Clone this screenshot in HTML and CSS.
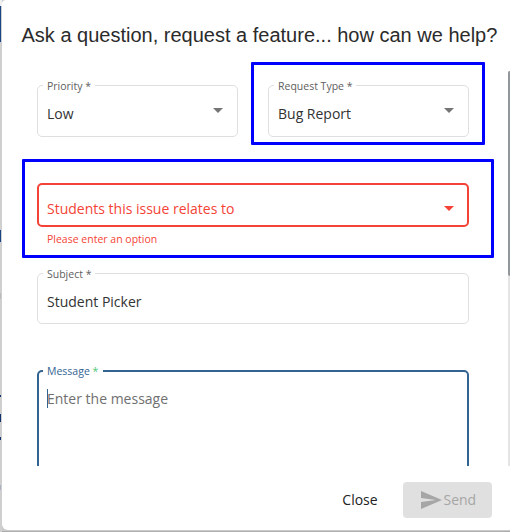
FILE: index.html
```html
<!DOCTYPE html>
<html lang="en">
<head>
<meta charset="utf-8">
<title>Support request</title>
<link rel="stylesheet" href="styles.css">
</head>
<body>
<div class="backdrop" aria-hidden="true"></div>
<main class="dialog">
  <h1 class="title"><span>Ask a question, request a feature... how can we help?</span></h1>
  <div class="scroll">
    <form class="form">
      <div class="row">
        <div class="field half">
          <span class="label">Priority *</span>
          <span class="value">Low</span>
          <svg class="arrow" width="10" height="5" viewBox="0 0 10 5"><path d="M0 0h10L5 5z"/></svg>
        </div>
        <div class="field half">
          <span class="label">Request Type *</span>
          <span class="value">Bug Report</span>
          <svg class="arrow" width="10" height="5" viewBox="0 0 10 5"><path d="M0 0h10L5 5z"/></svg>
          <div class="highlight highlight-type"></div>
        </div>
      </div>
      <div class="field error">
        <span class="value">Students this issue relates to</span>
        <svg class="arrow" width="10" height="5" viewBox="0 0 10 5"><path d="M0 0h10L5 5z"/></svg>
        <div class="highlight highlight-students"></div>
      </div>
      <div class="hint"><span>Please enter an option</span></div>
      <div class="field subject">
        <span class="label">Subject *</span>
        <span class="value">Student Picker</span>
      </div>
      <div class="field message">
        <span class="label">Message <span class="required">*</span></span>
        <span class="caret"></span>
        <span class="value placeholder">Enter the message</span>
      </div>
    </form>
    <div class="track"><div class="thumb"></div></div>
  </div>
  <footer class="actions">
    <button class="close" type="button"><span>Close</span></button>
    <button class="send" type="button" disabled>
      <svg width="21" height="18" viewBox="0 0 21 18"><path d="M0 0 21 9 0 18V11L15 9 0 7z"/></svg>
      <span>Send</span>
    </button>
  </footer>
</main>
</body>
</html>
```

FILE: styles.css
```css
* { box-sizing: border-box; }

body {
  margin: 0;
  width: 510px;
  height: 532px;
  overflow: hidden;
  display: flex;
  background: linear-gradient(to bottom, #cacaca 531px, #aeaeae 531px);
  font-family: "Open Sans", "Noto Sans", sans-serif;
  font-size: 14px;
  color: #333;
}

.backdrop {
  width: 2px;
  flex: none;
  background:
    linear-gradient(#174484, #174484) 0 6px / 1px 36px no-repeat,
    linear-gradient(#174484, #174484) 0 230px / 1px 12px no-repeat,
    linear-gradient(#bbb, #bbb) 0 293px / 1px 6px no-repeat,
    linear-gradient(#12306d, #12306d) 0 395px / 1px 2px no-repeat,
    linear-gradient(#12306d, #12306d) 0 414px / 1px 8px no-repeat,
    linear-gradient(#12306d, #12306d) 0 437px / 1px 3px no-repeat,
    linear-gradient(#aab2c2, #aab2c2) 0 485px / 1px 5px no-repeat,
    linear-gradient(#f0f0f0, #f0f0f0) 0 0 / 2px 6px no-repeat,
    #cfcfcf;
}

.dialog {
  width: 508px;
  height: 530px;
  display: flex;
  flex-direction: column;
  background: #fff;
  border-radius: 4px 0 0 6px;
}

.title {
  margin: 0;
  height: 71px;
  padding: 23px 0 0 19.5px;
  font: 400 20px/24px "Liberation Sans", Arial, sans-serif;
  color: #2b2b2b;
  white-space: nowrap;
}

/* Leaves room above the scroll area for the highlight frame. */
.scroll {
  height: 395px;
  display: flex;
  justify-content: space-between;
  clip-path: inset(-12px 0 0 0);
}

.form { width: 467px; padding: 14px 0 0 35px; }

.row { display: flex; gap: 30px; margin-bottom: 46px; }

.field {
  position: relative;
  display: flex;
  align-items: flex-start;
  justify-content: space-between;
  border: 1px solid #dfdfdf;
  border-radius: 5px;
  padding: 18px 14px 0 9px;
  line-height: 20px;
  white-space: nowrap;
}

.half { width: 201px; height: 52px; }

.label {
  position: absolute;
  left: 5px;
  top: -8px;
  padding: 0 4px;
  background: #fff;
  color: #606060;
  font-size: 10.5px;
  line-height: 16px;
}

.arrow { flex: none; margin-top: 4px; fill: #757575; }

.error {
  height: 44px;
  border: 2px solid #f44336;
  padding: 14px 13px 0 8px;
  color: #f44336;
}

.error .arrow { fill: #f44336; margin-top: 7px; }

.highlight { position: absolute; border: 3px solid #0000ff; border-radius: 1px; }
.highlight-type { left: -18px; top: -24px; width: 234px; height: 83px; }
.highlight-students { left: -17px; top: -26px; width: 472px; height: 99px; }

.hint {
  height: 46px;
  padding: 4px 0 0 10px;
  color: #f44336;
  font-size: 10.5px;
  line-height: 16px;
}

.subject { height: 51px; margin-bottom: 46px; }

.message {
  height: 140px;
  border: 2px solid #336491;
  padding: 17px 8px 0;
}

.message .label { left: 4px; top: -9px; padding-right: 5px; color: #336491; }
.label .required { color: #50c878; }
.placeholder { flex: 1; color: #707070; }

.caret {
  width: 1px;
  height: 19px;
  margin-right: -1px;
  background: #336491;
}

.track { width: 2px; background: #e4e4e4; }
.thumb { height: 205px; background: #92979b; border-radius: 2px 0 0 2px; }

.actions {
  display: flex;
  justify-content: flex-end;
  gap: 13px;
  padding: 16px 18px 0 0;
}

.close, .send {
  height: 36px;
  border: 0;
  border-radius: 4px;
  font: 14px/20px "Open Sans", "Noto Sans", sans-serif;
}

.close { width: 60px; padding: 0; background: #fff; color: #222; }

.send {
  width: 89px;
  display: flex;
  align-items: center;
  gap: 1.5px;
  padding: 0 0 0 18px;
  background: #e0e0e0;
  color: #a6a6a6;
}

.send svg { flex: none; fill: #a6a6a6; }
```
